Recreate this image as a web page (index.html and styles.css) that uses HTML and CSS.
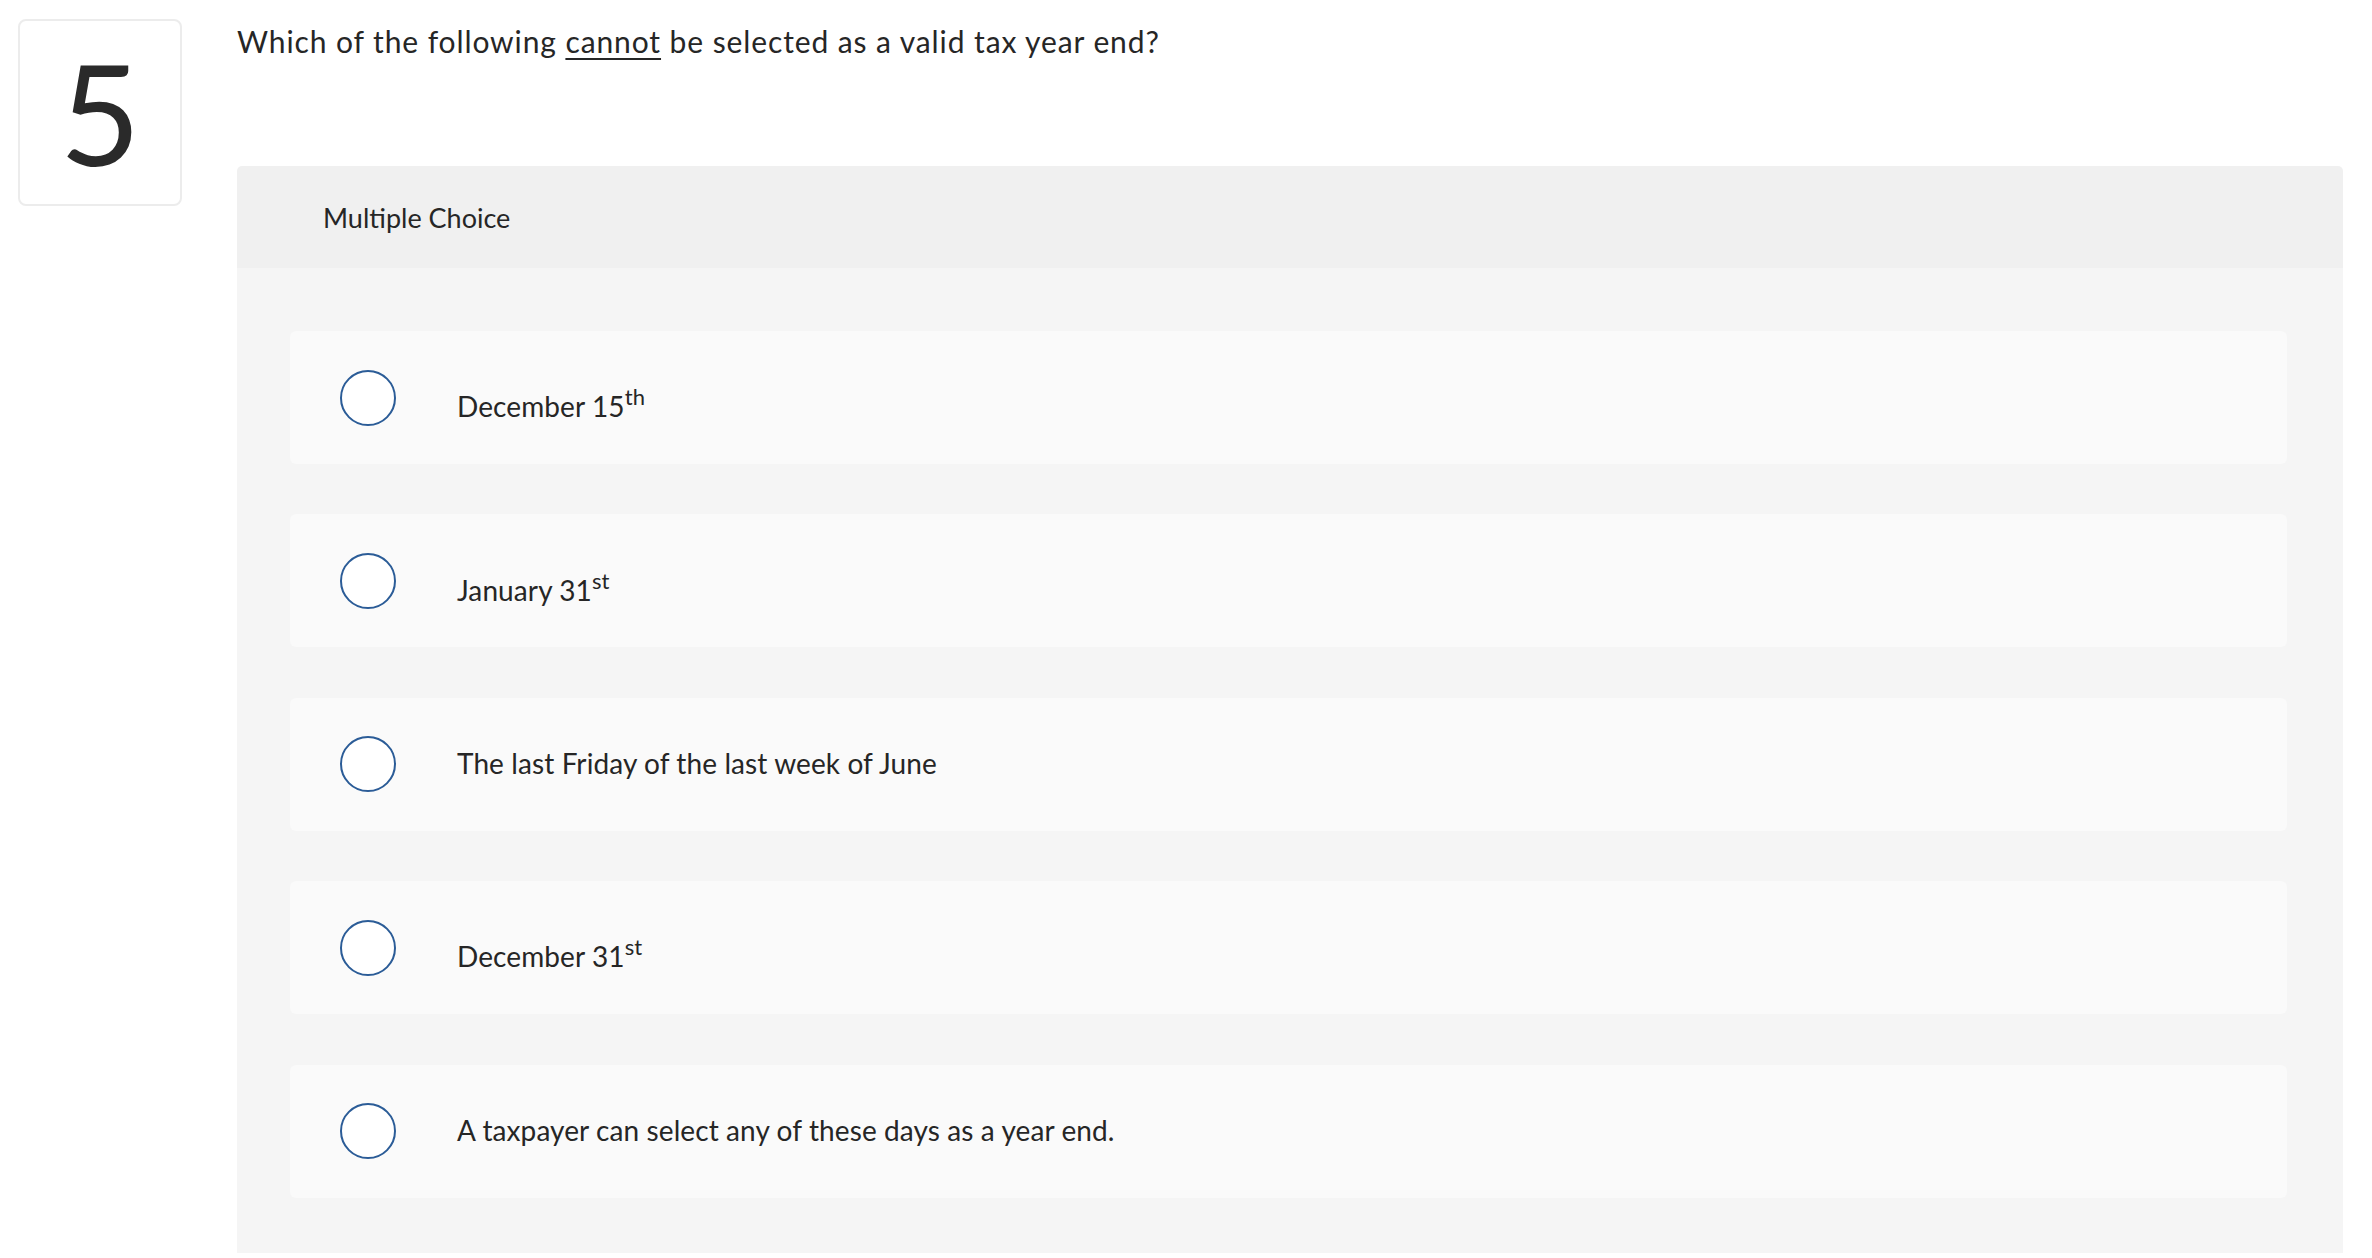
FILE: index.html
```html
<!DOCTYPE html>
<html lang="en">
<head>
<meta charset="utf-8">
<title>Question 5</title>
<link rel="stylesheet" href="styles.css">
</head>
<body>
<div class="page">
  <div class="qnum">5</div>
  <div class="qmain">
    <p class="prompt">Which of the following <u>cannot</u> be selected as a valid tax year end?</p>
    <div class="panel">
      <div class="panel-head">Multiple Choice</div>
      <div class="panel-body">
        <label class="choice"><span class="radio"></span><span class="label">December 15<sup>th</sup></span></label>
        <label class="choice"><span class="radio"></span><span class="label">January 31<sup>st</sup></span></label>
        <label class="choice"><span class="radio"></span><span class="label">The last Friday of the last week of June</span></label>
        <label class="choice"><span class="radio"></span><span class="label">December 31<sup>st</sup></span></label>
        <label class="choice"><span class="radio"></span><span class="label">A taxpayer can select any of these days as a year end.</span></label>
      </div>
    </div>
  </div>
</div>
</body>
</html>
```
FILE: styles.css
```css
html, body {
  margin: 0;
  padding: 0;
  background: #ffffff;
}
body {
  font-family: Lato, "Noto Sans", sans-serif;
  color: #262626;
}
.page {
  display: flex;
  align-items: flex-start;
  gap: 55px;
  padding: 19px 29px 0 18px;
}
.qnum {
  flex: none;
  box-sizing: border-box;
  width: 164px;
  height: 187px;
  border: 2px solid #ececec;
  border-radius: 8px;
  display: flex;
  align-items: center;
  justify-content: center;
  font-size: 140px;
  line-height: 1;
  color: #2a2a2a;
  padding-bottom: 2px;
}
.qmain {
  flex: 1;
  min-width: 0;
}
.prompt {
  margin: 4px 0 107px;
  font-size: 30px;
  line-height: 36px;
  letter-spacing: 0.9px;
}
.prompt u {
  text-decoration-thickness: 2px;
  text-underline-offset: 5px;
}
.panel {
  border-radius: 5px 5px 0 0;
  overflow: hidden;
}
.panel-head {
  height: 102px;
  box-sizing: border-box;
  background: #f0f0f0;
  padding-left: 86px;
  display: flex;
  align-items: center;
  font-size: 27px;
}
.panel-body {
  background: #f5f5f5;
  padding: 63px 56px 55px 53px;
  display: flex;
  flex-direction: column;
  gap: 50.4px;
}
.choice {
  display: flex;
  align-items: center;
  height: 133px;
  box-sizing: border-box;
  background: #fafafa;
  border-radius: 6px;
  padding-left: 50px;
  font-size: 28px;
  letter-spacing: 0.1px;
}
.radio {
  flex: none;
  box-sizing: border-box;
  width: 56px;
  height: 56px;
  border: 2px solid #2b5c97;
  border-radius: 50%;
  background: #ffffff;
  margin-right: 61px;
}
.label {
  line-height: 1.2;
}
.label sup {
  font-size: 22px;
  line-height: 52px;
  vertical-align: 12px;
}
```
